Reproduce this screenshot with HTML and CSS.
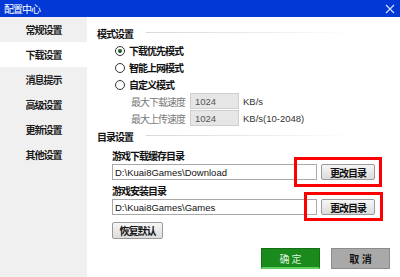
FILE: index.html
```html
<!DOCTYPE html>
<html lang="zh-CN">
<head>
    <meta charset="UTF-8">
    <title>配置中心</title>
    <link rel="stylesheet" href="styles.css">
</head>
<body>
<div class="window">
  <div class="titlebar">
    <span class="title">配置中心</span>
    <svg class="close" width="10" height="10" viewBox="0 0 10 10"><path d="M1 1L9 9M9 1L1 9" stroke="#cfe0ff" stroke-width="1.2"/></svg>
  </div>
  <div class="main">
    <div class="sidebar">
      <div class="nav-item">常规设置</div>
      <div class="nav-item active">下载设置</div>
      <div class="nav-item">消息提示</div>
      <div class="nav-item">高级设置</div>
      <div class="nav-item">更新设置</div>
      <div class="nav-item">其他设置</div>
    </div>
    <div class="content">
      <div class="heading"><span>模式设置</span><i class="rule"></i></div>
      <label class="radio"><span class="dot checked"></span>下载优先模式</label>
      <label class="radio"><span class="dot"></span>智能上网模式</label>
      <label class="radio"><span class="dot"></span>自定义模式</label>
      <div class="speed-row"><span class="speed-label">最大下载速度</span><input class="speed-input" value="1024" disabled><span class="unit">KB/s</span></div>
      <div class="speed-row second"><span class="speed-label">最大上传速度</span><input class="speed-input" value="1024" disabled><span class="unit">KB/s(10-2048)</span></div>
      <div class="heading dir-heading"><span>目录设置</span><i class="rule"></i></div>
      <div class="dir-block">
        <div class="dir-label">游戏下载缓存目录</div>
        <div class="dir-row">
          <input class="path" value="D:\Kuai8Games\Download">
          <button class="btn" type="button">更改目录</button>
          <div class="mark mark1"></div>
        </div>
        <div class="dir-label second">游戏安装目录</div>
        <div class="dir-row">
          <input class="path" value="D:\Kuai8Games\Games">
          <button class="btn" type="button">更改目录</button>
          <div class="mark mark2"></div>
        </div>
        <button class="btn reset" type="button">恢复默认</button>
      </div>
      <div class="actions">
        <button class="ok" type="button">确 定</button>
        <button class="cancel" type="button">取 消</button>
      </div>
    </div>
  </div>
</div>
</body>
</html>
```

FILE: styles.css
```css
* {
  box-sizing: border-box;
}
body {
  margin: 0;
  font-family: "Noto Sans CJK SC", "Liberation Sans", sans-serif;
  font-size: 10px;
  color: #111;
  background: #fff;
}
.window {
  width: 400px;
  height: 277px;
  display: flex;
  flex-direction: column;
  overflow: hidden;
}
.titlebar {
  height: 17px;
  background: #0239d6;
  color: #fff;
  display: flex;
  align-items: center;
  justify-content: space-between;
  padding: 0 5px 0 4px;
}
.title {
  font-size: 10px;
  letter-spacing: -1px;
  line-height: 17px;
}
.main {
  flex: 1;
  display: flex;
}
.sidebar {
  width: 87px;
  background: #f0f0f0;
}
.nav-item {
  height: 25px;
  line-height: 25px;
  text-align: center;
  font-size: 10px;
  letter-spacing: -1px;
  font-weight: bold;
  color: #1a1a1a;
}
.nav-item.active {
  background: #fff;
}
.content {
  flex: 1;
  padding: 8px 0 0 10px;
}
.heading {
  display: flex;
  align-items: center;
  height: 16px;
  font-weight: bold;
  font-size: 10px;
  letter-spacing: -1px;
}
.rule {
  flex: 0 0 205px;
  height: 1px;
  margin-left: 13px;
  margin-top: -2px;
  background: linear-gradient(to right, #d8d8d8, #eef2f4 70%, #fff);
}
.radio {
  display: flex;
  align-items: center;
  height: 17px;
  padding-left: 18px;
  font-size: 10px;
  letter-spacing: -1px;
  font-weight: bold;
}
.radio:first-of-type {
  margin-top: 1px;
}
.dot {
  width: 10px;
  height: 10px;
  border: 1px solid #333;
  border-radius: 50%;
  margin-right: 4px;
  position: relative;
}
.dot.checked::after {
  content: "";
  position: absolute;
  left: 2px;
  top: 2px;
  width: 4px;
  height: 4px;
  border-radius: 50%;
  background: #1b5e20;
}
.speed-row {
  display: flex;
  align-items: center;
  height: 16px;
  padding-left: 34px;
}
.speed-row.second {
  margin-top: 1px;
}
.speed-label {
  width: 59px;
  color: #7a7a7a;
  font-size: 10px;
  letter-spacing: -1px;
  white-space: nowrap;
}
.speed-input {
  width: 49px;
  height: 16px;
  border: 1px solid #cfcfcf;
  background: #e6e6e6;
  font-family: "Liberation Sans", sans-serif;
  font-size: 9.5px;
  color: #555;
  padding: 0 4px;
}
.unit {
  margin-left: 4px;
  font-family: "Liberation Sans", sans-serif;
  font-size: 9.5px;
  color: #333;
}
.dir-heading {
  margin-top: 2px;
}
.dir-block {
  padding-left: 15px;
}
.dir-label {
  height: 16px;
  line-height: 16px;
  margin-top: 4px;
  font-size: 10px;
  letter-spacing: -1px;
  font-weight: bold;
}
.dir-label.second {
  margin-top: 3px;
}
.dir-row {
  display: flex;
  align-items: center;
  gap: 4px;
  height: 16px;
  position: relative;
}
.path {
  width: 205px;
  height: 16px;
  border: 1px solid #a8a8a8;
  font-family: "Liberation Sans", sans-serif;
  font-size: 9.5px;
  color: #111;
  padding: 0 2px;
  outline: none;
}
.btn {
  height: 16px;
  width: 54px;
  padding: 0;
  font-family: "Noto Sans CJK SC", sans-serif;
  font-size: 10px;
  letter-spacing: -1px;
  font-weight: bold;
  color: #111;
  border: 1px solid #9a9a9a;
  border-radius: 2px;
  background: linear-gradient(#f6f6f6, #dcdcdc);
}
.reset {
  display: block;
  margin-top: 7px;
  width: 51px;
  height: 17px;
}
.mark {
  position: absolute;
  border: 3px solid #f00;
  pointer-events: none;
}
.mark1 {
  left: 182px;
  top: -7px;
  width: 88px;
  height: 30px;
}
.mark2 {
  left: 192px;
  top: -7px;
  width: 79px;
  height: 29px;
}
.actions {
  display: flex;
  gap: 11px;
  margin-top: 9px;
  padding-left: 164px;
}
.ok,
.cancel {
  width: 59px;
  height: 21px;
  font-family: "Noto Sans CJK SC", sans-serif;
  font-size: 10px;
  font-weight: bold;
  padding: 0;
}
.ok {
  background: #1a8a1c;
  color: #dff2df;
  font-weight: normal;
  border: 1px solid #147014;
  border-bottom: 2px solid #5fcf5f;
}
.cancel {
  background: #a9a9a9;
  color: #111;
  border: 1px solid #8c8c8c;
}
```
